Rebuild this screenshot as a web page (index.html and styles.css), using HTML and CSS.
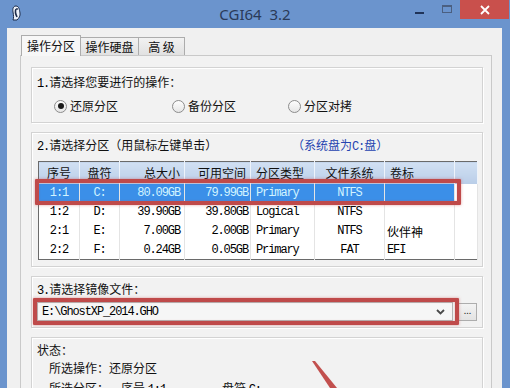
FILE: index.html
```html
<!DOCTYPE html>
<html>
<head>
    <meta charset="utf-8">
    <title>CGI64 3.2</title>
    <link rel="stylesheet" href="styles.css">
</head>
<body>
    <div class="titlebar">
        <div class="title-left">
            <svg class="app-icon" width="11" height="16" viewBox="0 0 11 16">
                <path d="M5 1 C2 1 1.5 4 2 7 C2.5 10 3 13 2 15 L6 15 C8 13 9.5 11 9 8 C8.5 5 8 1 5 1 Z" fill="#eef3fb" stroke="#1d2c4a" stroke-width="1"/>
                <path d="M5 4 C4 6 4.5 9 6 12" fill="none" stroke="#1d2c4a" stroke-width="1.6"/>
                <circle cx="6" cy="4" r="0.9" fill="#1d2c4a"/>
            </svg>
        </div>
        <div class="title">CGI64&nbsp; 3.2</div>
        <div class="caption">
            <span class="btn-min"></span>
            <span class="btn-max"></span>
            <span class="btn-close">
                <svg width="10" height="10" viewBox="0 0 10 10">
                    <path d="M1 1 L9 9 M9 1 L1 9" stroke="#fff" stroke-width="1.8"/>
                </svg>
            </span>
        </div>
    </div>

    <div class="client">
        <div class="tabs">
            <div class="tab active">操作分区</div>
            <div class="tab">操作硬盘</div>
            <div class="tab last">高 级</div>
        </div>

        <div class="panel">
            <div class="group g1">
                <div class="label"><span class="mono">1.</span>请选择您要进行的操作：</div>
                <div class="radios">
                    <div class="radio checked"><i></i>还原分区</div>
                    <div class="radio"><i></i>备份分区</div>
                    <div class="radio"><i></i>分区对拷</div>
                </div>
            </div>

            <div class="group g2">
                <div class="label split">
                    <span class="lead"><span class="mono">2.</span>请选择分区（用鼠标左键单击）</span>
                    <span class="sys">（系统盘为<span class="mono">C:</span>盘）</span>
                </div>
                <div class="table-wrap">
                    <table class="parts">
                        <colgroup>
                            <col style="width:41px"><col style="width:40px"><col style="width:65px"><col style="width:66px">
                            <col style="width:64px"><col style="width:70px"><col style="width:70px"><col style="width:23px">
                        </colgroup>
                        <thead>
                            <tr>
                                <th>序号</th><th>盘符</th><th class="r">总大小</th><th class="r">可用空间</th>
                                <th class="l">分区类型</th><th>文件系统</th><th class="l">卷标</th><th></th>
                            </tr>
                        </thead>
                        <tbody>
                            <tr class="sel">
                                <td>1:1</td><td>C:</td><td class="r">80.09GB</td><td class="r">79.99GB</td>
                                <td class="l">Primary</td><td>NTFS</td><td class="l"></td><td class="blank"></td>
                            </tr>
                            <tr>
                                <td>1:2</td><td>D:</td><td class="r">39.90GB</td><td class="r">39.80GB</td>
                                <td class="l">Logical</td><td>NTFS</td><td class="l"></td><td></td>
                            </tr>
                            <tr>
                                <td>2:1</td><td>E:</td><td class="r">7.00GB</td><td class="r">2.00GB</td>
                                <td class="l">Primary</td><td>NTFS</td><td class="l cjk">伙伴神</td><td></td>
                            </tr>
                            <tr>
                                <td>2:2</td><td>F:</td><td class="r">0.24GB</td><td class="r">0.05GB</td>
                                <td class="l">Primary</td><td>FAT</td><td class="l">EFI</td><td></td>
                            </tr>
                        </tbody>
                    </table>
                    <div class="mark mark-row"></div>
                </div>
            </div>

            <div class="group g3">
                <div class="label"><span class="mono">3.</span>请选择镜像文件：</div>
                <div class="combo-row">
                    <div class="combo">
                        <span class="mono">E:\GhostXP_2014.GHO</span>
                        <svg class="arrow" width="9" height="6" viewBox="0 0 9 6">
                            <path d="M1 1 L4.5 4.5 L8 1" fill="none" stroke="#4a4a4a" stroke-width="1.8"/>
                        </svg>
                    </div>
                    <div class="browse">...</div>
                    <div class="mark mark-combo"></div>
                </div>
            </div>

            <div class="group g4">
                <div class="label">状态：</div>
                <div class="status">所选操作：还原分区</div>
                <div class="status row2">
                    <span class="k">所选分区：</span>
                    <span class="v1">序号 <span class="mono">1:1</span></span>
                    <span>盘符 <span class="mono">C:</span></span>
                </div>
            </div>
        </div>
    </div>

    <svg class="pointer" width="40" height="33" viewBox="0 0 40 33">
        <polygon points="7,6 10,6 32,33 25,33" fill="#c2504e"/>
    </svg>
</body>
</html>
```

FILE: styles.css
```css
* {
    box-sizing: border-box;
}
body {
    margin: 0;
    width: 510px;
    height: 388px;
    overflow: hidden;
    position: relative;
    background: #6b94cd;
    font-family: "Noto Sans CJK SC", sans-serif;
    font-size: 12px;
    color: #111;
}
.mono {
    font-family: "Liberation Mono", monospace;
    font-size: 12px;
    letter-spacing: -1.1px;
    color: #000;
}

/* title bar */
.titlebar {
    display: grid;
    grid-template-columns: 1fr auto 1fr;
    height: 28px;
}
.app-icon {
    display: block;
    margin: 5px 0 0 11px;
}
.title {
    font-family: "Noto Sans", sans-serif;
    font-size: 15px;
    line-height: 28px;
    color: #2a3a58;
}
.caption {
    display: flex;
    justify-content: flex-end;
    align-items: flex-start;
}
.btn-min {
    width: 9px;
    height: 2px;
    margin-top: 12px;
    background: #1f3358;
}
.btn-max {
    width: 10px;
    height: 8px;
    margin: 5px 0 0 18px;
    border: 1px solid #4b5f80;
    border-top-width: 2px;
}
.btn-close {
    width: 49px;
    height: 19px;
    margin: 0 1px 0 8px;
    background: #c9504c;
    display: flex;
    align-items: center;
    justify-content: center;
}

/* client */
.client {
    margin: 0 8px 0 7px;
    height: 360px;
    background: #f0f0f0;
    padding: 7px 10px 0 13px;
}
.tabs {
    display: flex;
    align-items: flex-end;
    padding-left: 1px;
}
.tab {
    height: 18px;
    line-height: 17px;
    border: 1px solid #acacac;
    border-bottom: none;
    background: linear-gradient(#f2f2f2, #e1e1e1);
    text-align: center;
}
.tab.active {
    width: 60px;
    height: 21px;
    line-height: 19px;
    margin-bottom: -1px;
    background: #f7f7f7;
    position: relative;
    z-index: 1;
}
.tab:nth-child(2) {
    width: 58px;
    border-left: none;
}
.tab.last {
    width: 46px;
    border-left: none;
}
.panel {
    width: 472px;
    height: 340px;
    border: 1px solid #c9c9c9;
    background: #f2f2f2;
    padding: 11px 8px 0 10px;
}

/* group boxes */
.group {
    border: 1px solid #d3d3d3;
    box-shadow: inset 1px 1px 0 #fff, 1px 1px 0 #fff;
    padding: 4px 5px 6px;
    margin-bottom: 9px;
}
.label {
    line-height: 16px;
}
.g1 {
    padding: 6px 5px 8px;
}
.radios {
    display: grid;
    grid-template-columns: 118px 116px auto;
    padding-left: 17px;
    margin-top: 6px;
}
.radio {
    display: flex;
    align-items: center;
    line-height: 16px;
}
.radio i {
    width: 13px;
    height: 13px;
    margin-right: 3px;
    border: 1px solid #8c8c8c;
    border-radius: 50%;
    background: linear-gradient(#fdfdfd, #e6e6e6);
    display: flex;
    align-items: center;
    justify-content: center;
}
.radio.checked i::after {
    content: "";
    width: 6px;
    height: 6px;
    border-radius: 50%;
    background: #1a1a1a;
}
.split {
    display: flex;
}
.lead {
    width: 255px;
}
.sys {
    color: #2643b0;
}
.sys .mono {
    color: #2643b0;
}

/* partition table */
.table-wrap {
    position: relative;
    margin: 6px 0 0 1px;
}
.parts {
    width: 440px;
    border-collapse: collapse;
    table-layout: fixed;
    border: 1px solid #6a6a6a;
}
.parts th {
    height: 22px;
    padding: 0;
    font-weight: normal;
    background: linear-gradient(#d1e0f3, #b9cde8);
    border-right: 1px solid #eef3fa;
    text-align: center;
}
.parts td {
    height: 19px;
    padding: 0;
    text-align: center;
    border-right: 1px solid #e4e4e4;
    background: #fff;
    color: #000;
    font-family: "Liberation Mono", monospace;
    font-size: 12px;
    letter-spacing: -1.1px;
}
.parts .r {
    text-align: right;
    padding-right: 4px;
}
.parts td.r:nth-child(4) {
    padding-right: 2px;
}
.parts .l {
    text-align: left;
    padding-left: 5px;
}
.parts td.l:nth-child(7) {
    padding-left: 2px;
}
.parts td.cjk {
    font-family: "Noto Sans CJK SC", sans-serif;
    font-size: 12px;
    letter-spacing: 0;
}
.parts tr.sel td {
    background: #3b8fe8;
    color: #d2f4ff;
}
.parts tr.sel td.blank {
    background: #fff;
}

/* red annotation boxes */
.mark {
    position: absolute;
    border: 4px solid #bf4a4a;
    border-radius: 1px;
    box-shadow: 0 0 3px rgba(200, 80, 80, 0.55), inset 0 0 2px rgba(200, 80, 80, 0.4);
}
.mark-row {
    left: -3px;
    top: 18px;
    width: 426px;
    height: 26px;
}
.mark-combo {
    left: -4px;
    top: -4px;
    width: 426px;
    height: 27px;
}

/* image combo */
.g3 .combo-row {
    position: relative;
    display: flex;
    align-items: center;
    margin-top: 3px;
}
.combo {
    width: 418px;
    height: 19px;
    border: 1px solid #b5b5b5;
    background: #f6f6f6;
    display: flex;
    align-items: center;
    padding-left: 4px;
}
.arrow {
    margin-left: auto;
    margin-right: 7px;
}
.browse {
    width: 19px;
    height: 18px;
    margin-left: 5px;
    border: 1px solid #adadad;
    background: linear-gradient(#f3f3f3, #e3e3e3);
    font-size: 9px;
    line-height: 14px;
    text-align: center;
    color: #333;
}

/* status */
.status {
    line-height: 16px;
    margin-top: 2px;
    padding-left: 12px;
}
.status.row2 {
    margin-top: 4px;
    display: flex;
}
.k {
    width: 72px;
}
.v1 {
    width: 101px;
}

.pointer {
    position: absolute;
    left: 305px;
    top: 355px;
}
```
